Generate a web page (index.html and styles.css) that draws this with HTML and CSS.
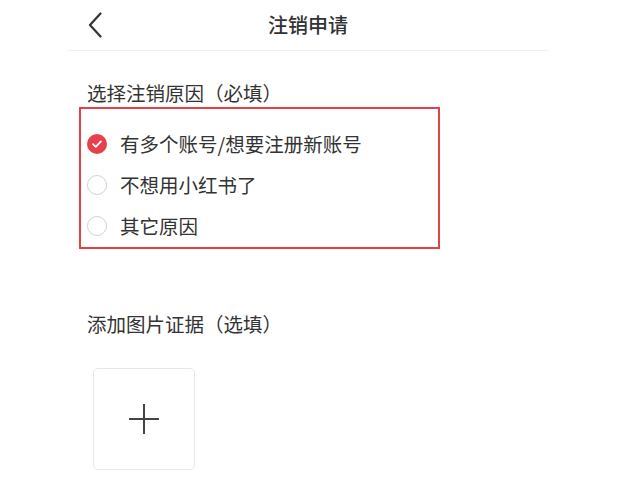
FILE: index.html
```html
<!DOCTYPE html>
<html lang="zh-CN">
<head>
<meta charset="utf-8">
<title>注销申请</title>
<link rel="stylesheet" href="styles.css">
</head>
<body>
<div class="page">
  <header class="nav">
    <div class="nav-left">
      <svg class="back" width="14" height="26" viewBox="0 0 14 26"><path d="M12.5 1.5 L2 13 L12.5 24.5" fill="none" stroke="#333" stroke-width="2.2" stroke-linecap="round" stroke-linejoin="round"/></svg>
    </div>
    <h1 class="nav-title">注销申请</h1>
    <div class="nav-right"></div>
  </header>

  <h2 class="section-title">选择注销原因（必填）</h2>
  <div class="reasons">
    <div class="option">
      <span class="radio checked"><svg width="20" height="20" viewBox="0 0 20 20"><path d="M6 10.2 L8.7 12.8 L14 7.4" fill="none" stroke="#fff" stroke-width="1.8" stroke-linecap="round" stroke-linejoin="round"/></svg></span>
      <span class="label">有多个账号/想要注册新账号</span>
    </div>
    <div class="option">
      <span class="radio"></span>
      <span class="label">不想用小红书了</span>
    </div>
    <div class="option">
      <span class="radio"></span>
      <span class="label">其它原因</span>
    </div>
  </div>

  <h2 class="section-title second">添加图片证据（选填）</h2>
  <div class="upload">
    <svg width="32" height="32" viewBox="0 0 32 32"><path d="M16 1 V31 M1 16 H31" stroke="#444" stroke-width="2" fill="none"/></svg>
  </div>
</div>
</body>
</html>
```

FILE: styles.css
```css
html, body {
  margin: 0;
  padding: 0;
  background: #fff;
}
body {
  font-family: "Noto Sans CJK SC", "Noto Sans", sans-serif;
  color: #333;
}
.page {
  width: 480px;
  margin-left: 68px;
}
.nav {
  height: 50px;
  border-bottom: 1px solid #efefef;
  display: grid;
  grid-template-columns: 1fr auto 1fr;
  align-items: center;
}
.nav-left {
  padding-left: 20px;
  display: flex;
  align-items: center;
}
.back {
  display: block;
}
.nav-title {
  margin: 0;
  font-size: 20px;
  font-weight: 500;
  color: #333;
  line-height: 28px;
}
.section-title {
  margin: 28px 0 0 19px;
  font-size: 19.5px;
  font-weight: 400;
  line-height: 28px;
  color: #333;
}
.section-title.second {
  margin-top: 61px;
}
.reasons {
  margin-left: 11px;
  width: 351px;
  border: 2px solid #e0424a;
  padding: 14px 0 1px 6px;
}
.option {
  height: 41px;
  display: flex;
  align-items: center;
}
.radio {
  width: 20px;
  height: 20px;
  box-sizing: border-box;
  border: 1px solid #d2d2d2;
  border-radius: 50%;
  flex: none;
  display: flex;
}
.radio.checked {
  border: none;
  background: #e8404b;
}
.label {
  margin-left: 13px;
  font-size: 19.5px;
  line-height: 28px;
  color: #333;
}
.upload {
  margin: 30px 0 0 25px;
  width: 102px;
  height: 102px;
  box-sizing: border-box;
  border: 1px solid #e6e6e6;
  border-radius: 5px;
  display: flex;
  align-items: center;
  justify-content: center;
}
```
